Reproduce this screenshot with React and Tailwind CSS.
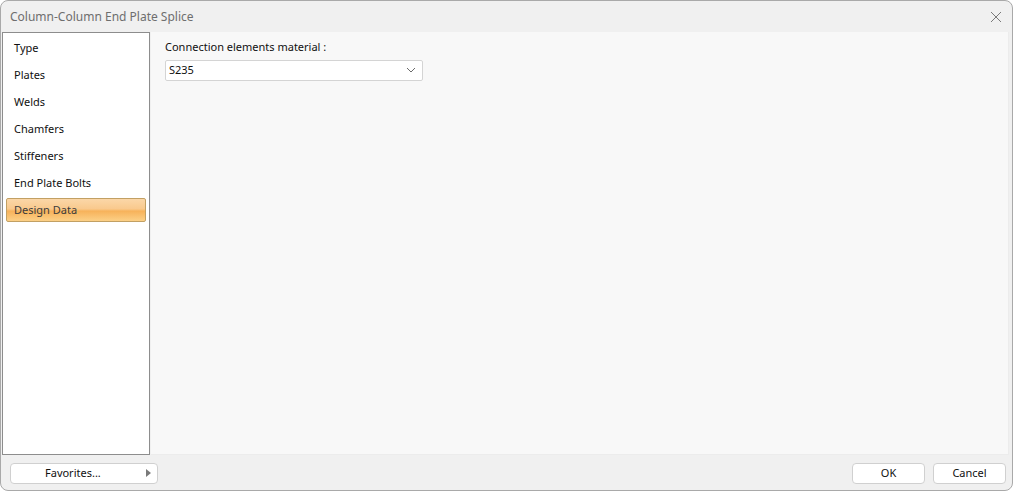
import React from "react";

const items = ["Type", "Plates", "Welds", "Chamfers", "Stiffeners", "End Plate Bolts", "Design Data"];

export default function App() {
  return (
    <div className="w-[1013px] h-[491px] bg-white" style={{ fontFamily: '"Noto Sans", "Open Sans", sans-serif' }}>
      <div className="w-[1013px] h-[491px] flex flex-col bg-[#f0f0f0] border border-[#a9a9a9] rounded-[8px] overflow-hidden">
        <div className="h-[31px] flex items-center justify-between pl-[9px] pr-[10px] shrink-0">
          <span className="text-[12px] text-[#6e6e6e]">Column-Column End Plate Splice</span>
          <svg width="12" height="12" viewBox="0 0 12 12" className="mt-[1px]">
            <path d="M1 1 L11 11 M11 1 L1 11" stroke="#7a7a7a" strokeWidth="1" />
          </svg>
        </div>
        <div className="flex flex-1 min-h-0 pl-[1px] pr-[3px]">
          <div className="w-[148px] bg-white border border-[#8d8d8d] flex flex-col px-[3px]">
            {items.map((it, i) => {
              const sel = i === items.length - 1;
              return (
                <div
                  key={it}
                  className={
                    "h-[24px] mt-[3px] flex items-center text-[11px] " +
                    (sel
                      ? "pl-[7px] rounded-[2px] border border-[#c2a063] text-[#3c3c3c] bg-[linear-gradient(to_bottom,#fbd7a8_0%,#f9c98d_45%,#f7b25a_55%,#fcd087_100%)]"
                      : "pl-[8px] text-[#101010]")
                  }
                >
                  {it}
                </div>
              );
            })}
          </div>
          <div className="flex-1 ml-[1px] bg-[#f8f8f8] border-r border-b border-[#ececec] pl-[14px] pt-[7px]">
            <div className="text-[11px] text-[#101010]">Connection elements material :</div>
            <div className="mt-[4px] w-[258px] h-[21px] bg-white border border-[#d4d4d4] rounded-[2px] flex items-center justify-between pl-[3px] pr-[6px]">
              <span className="text-[11px] text-[#101010]">S235</span>
              <svg width="10" height="6" viewBox="0 0 10 6">
                <path d="M1 1 L5 5 L9 1" stroke="#6a6a6a" fill="none" strokeWidth="1" />
              </svg>
            </div>
          </div>
        </div>
        <div className="h-[35px] shrink-0 flex items-center justify-between pl-[9px] pr-[6px] pt-[1px]">
          <button className="w-[148px] h-[21px] bg-white border border-[#d0d0d0] rounded-[4px] flex items-center justify-between pl-[34px] pr-[6px] text-[11px] text-[#101010]">
            <span>Favorites...</span>
            <svg width="5" height="8" viewBox="0 0 5 8"><path d="M0 0 L5 4 L0 8 Z" fill="#7a7a7a" /></svg>
          </button>
          <div className="flex gap-[8px]">
            <button className="w-[73px] h-[21px] bg-white border border-[#d0d0d0] rounded-[4px] text-[11px] text-[#101010]">OK</button>
            <button className="w-[73px] h-[21px] bg-white border border-[#d0d0d0] rounded-[4px] text-[11px] text-[#101010]">Cancel</button>
          </div>
        </div>
      </div>
    </div>
  );
}
